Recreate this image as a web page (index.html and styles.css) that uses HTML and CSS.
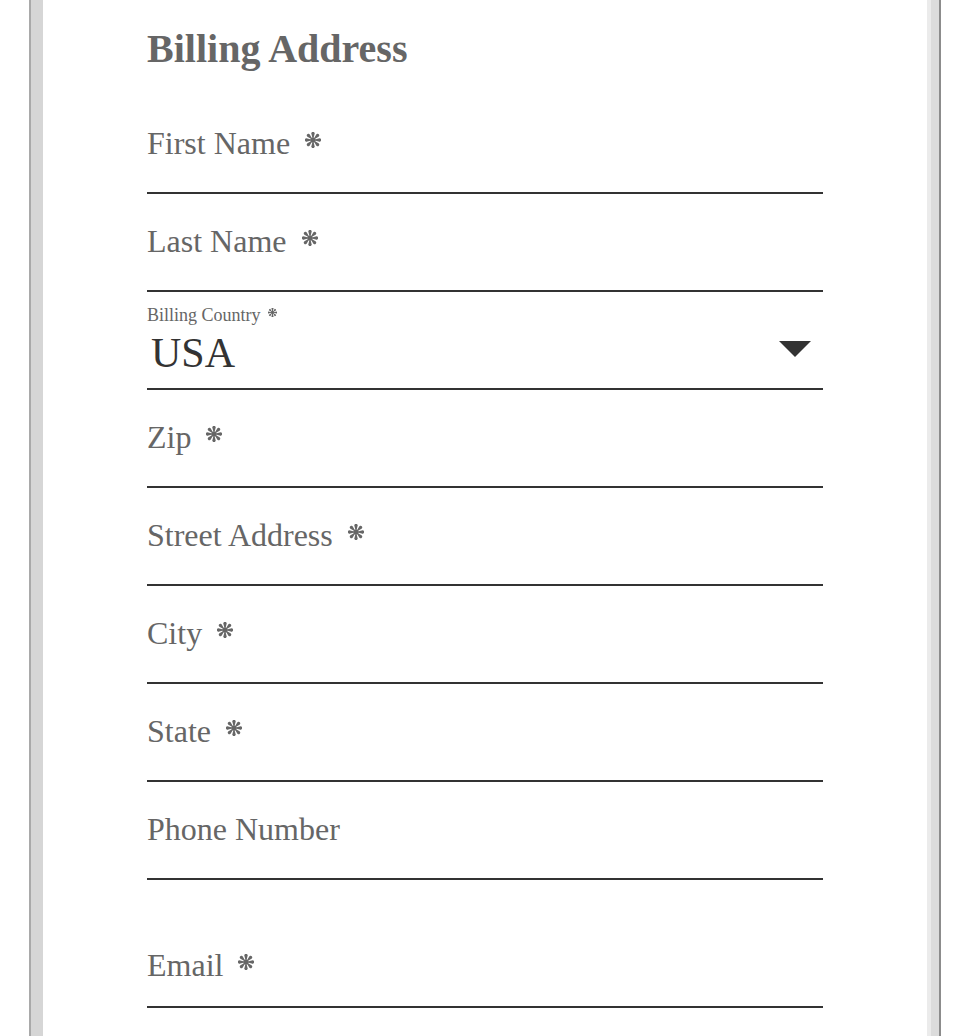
FILE: index.html
```html
<!DOCTYPE html>
<html>
<head>
<meta charset="utf-8">
<link rel="stylesheet" href="styles.css">
</head>
<body>
<svg width="0" height="0" class="defs" aria-hidden="true">
  <defs>
    <g id="ast">
      <g fill="currentColor">
        <path d="M8 8 L6.5 2.3 A1.7 1.7 0 1 1 9.5 2.3 Z"/>
        <path d="M8 8 L6.5 2.3 A1.7 1.7 0 1 1 9.5 2.3 Z" transform="rotate(45 8 8)"/>
        <path d="M8 8 L6.5 2.3 A1.7 1.7 0 1 1 9.5 2.3 Z" transform="rotate(90 8 8)"/>
        <path d="M8 8 L6.5 2.3 A1.7 1.7 0 1 1 9.5 2.3 Z" transform="rotate(135 8 8)"/>
        <path d="M8 8 L6.5 2.3 A1.7 1.7 0 1 1 9.5 2.3 Z" transform="rotate(180 8 8)"/>
        <path d="M8 8 L6.5 2.3 A1.7 1.7 0 1 1 9.5 2.3 Z" transform="rotate(225 8 8)"/>
        <path d="M8 8 L6.5 2.3 A1.7 1.7 0 1 1 9.5 2.3 Z" transform="rotate(270 8 8)"/>
        <path d="M8 8 L6.5 2.3 A1.7 1.7 0 1 1 9.5 2.3 Z" transform="rotate(315 8 8)"/>
        <circle cx="8" cy="8" r="2.6"/>
      </g>
    </g>
  </defs>
</svg>
<div class="frame">
  <div class="frame-mid">
    <div class="frame-inner">
      <form class="form">
        <h2 class="title">Billing Address</h2>
        <div class="field"><span class="label">First Name</span><svg class="req" viewBox="0 0 16 16"><use href="#ast"/></svg></div>
        <div class="field"><span class="label">Last Name</span><svg class="req" viewBox="0 0 16 16"><use href="#ast"/></svg></div>
        <div class="field country">
          <div class="small-label">Billing Country<svg class="req-sm" viewBox="0 0 16 16"><use href="#ast"/></svg></div>
          <div class="select-row"><span class="value">USA</span><span class="caret"></span></div>
        </div>
        <div class="field"><span class="label">Zip</span><svg class="req" viewBox="0 0 16 16"><use href="#ast"/></svg></div>
        <div class="field"><span class="label">Street Address</span><svg class="req" viewBox="0 0 16 16"><use href="#ast"/></svg></div>
        <div class="field"><span class="label">City</span><svg class="req" viewBox="0 0 16 16"><use href="#ast"/></svg></div>
        <div class="field"><span class="label">State</span><svg class="req" viewBox="0 0 16 16"><use href="#ast"/></svg></div>
        <div class="field"><span class="label">Phone Number</span></div>
        <div class="field email"><span class="label">Email</span><svg class="req" viewBox="0 0 16 16"><use href="#ast"/></svg></div>
      </form>
    </div>
  </div>
</div>
</body>
</html>
```

FILE: styles.css
```css
html, body {
  margin: 0;
  padding: 0;
  background: #fff;
}
body {
  font-family: "Liberation Serif", "Times New Roman", serif;
  color: #666;
}
.defs {
  position: absolute;
  width: 0;
  height: 0;
  overflow: hidden;
}
.frame {
  margin-left: 29px;
  width: 908px;
  border-left: 2px solid #a9a9a9;
  border-right: 2px solid #8c8c8c;
  min-height: 1036px;
}
.frame-mid {
  border-left: 12px solid #d6d6d6;
  border-right: 8px solid #dcdcdc;
  min-height: 1036px;
}
.frame-inner {
  border-right: 4px solid #ebebeb;
  min-height: 1036px;
  background: #fff;
}
.form {
  padding: 0 104px 0 104px;
}
.title {
  margin: 0;
  height: 96px;
  box-sizing: border-box;
  padding-top: 26px;
  font-size: 40px;
  line-height: 46px;
  font-weight: bold;
  color: #666;
}
.field {
  border-bottom: 2px solid #333;
  padding-top: 29px;
  box-sizing: content-box;
  height: 67px;
  display: flex;
  align-items: flex-start;
}
.label {
  font-size: 32px;
  line-height: 36px;
  color: #666;
}
.req {
  width: 16px;
  height: 16px;
  margin-left: 15px;
  margin-top: 7px;
  color: #666;
  flex: none;
}
.country {
  flex-direction: column;
  align-items: stretch;
  padding-top: 13px;
  height: 83px;
}
.small-label {
  font-size: 18px;
  line-height: 20px;
  color: #666;
}
.req-sm {
  width: 9px;
  height: 9px;
  margin-left: 7px;
  vertical-align: 4px;
  color: #666;
}
.select-row {
  display: flex;
  align-items: center;
  justify-content: space-between;
  padding-left: 4px;
  padding-right: 12px;
  padding-top: 4px;
  height: 48px;
}
.value {
  font-size: 42px;
  line-height: 48px;
  color: #333;
}
.caret {
  width: 0;
  height: 0;
  border-left: 16px solid transparent;
  border-right: 16px solid transparent;
  border-top: 16px solid #333;
  margin-top: -8px;
}
.email {
  padding-top: 67px;
  height: 59px;
}
```
